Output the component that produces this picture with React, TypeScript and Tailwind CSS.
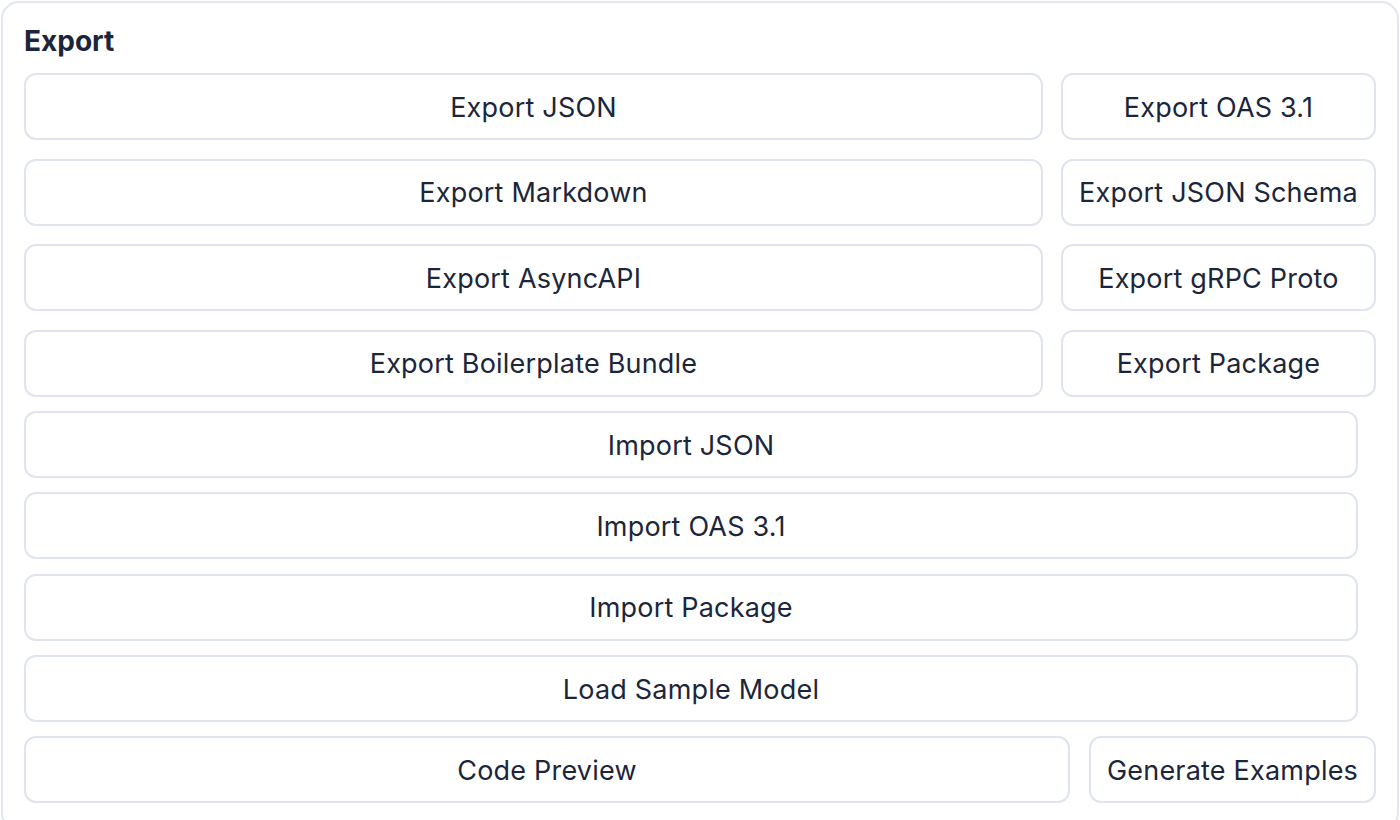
const topButtons = [
  'Export JSON',
  'Export OAS 3.1',
  'Export Markdown',
  'Export JSON Schema',
  'Export AsyncAPI',
  'Export gRPC Proto',
  'Export Boilerplate Bundle',
  'Export Package',
]

const fullRows = ['Import JSON', 'Import OAS 3.1', 'Import Package', 'Load Sample Model']

function Btn({ label }: { label: string }) {
  return (
    <button className="h-[67px] w-full flex items-center justify-center pt-[3px] border-2 border-[#dfe4ee] rounded-[12px] bg-white text-[27px] tracking-[0.2px] text-[#1c263a] whitespace-nowrap">
      {label}
    </button>
  )
}

export default function App() {
  return (
    <div className="min-h-screen bg-white p-px" style={{ fontFamily: 'Inter, "Noto Sans", sans-serif' }}>
      <div className="border-2 border-[#e1e6ef] rounded-[18px] pl-[21px] pt-[22px] pb-6 min-h-[830px]">
        <h2 className="text-[28px] leading-[32px] font-bold text-[#1c263a]">Export</h2>

        <div className="mt-4 w-[1352px] grid grid-cols-[1fr_315px] gap-x-[18px] gap-y-[18.5px]">
          {topButtons.map((label) => (
            <Btn key={label} label={label} />
          ))}
        </div>

        <div className="mt-[14.5px] w-[1334px] flex flex-col gap-[14.25px]">
          {fullRows.map((label) => (
            <Btn key={label} label={label} />
          ))}
        </div>

        <div className="mt-[14.5px] w-[1352px] grid grid-cols-[1fr_287px] gap-x-[19px]">
          <Btn label="Code Preview" />
          <Btn label="Generate Examples" />
        </div>
      </div>
    </div>
  )
}
